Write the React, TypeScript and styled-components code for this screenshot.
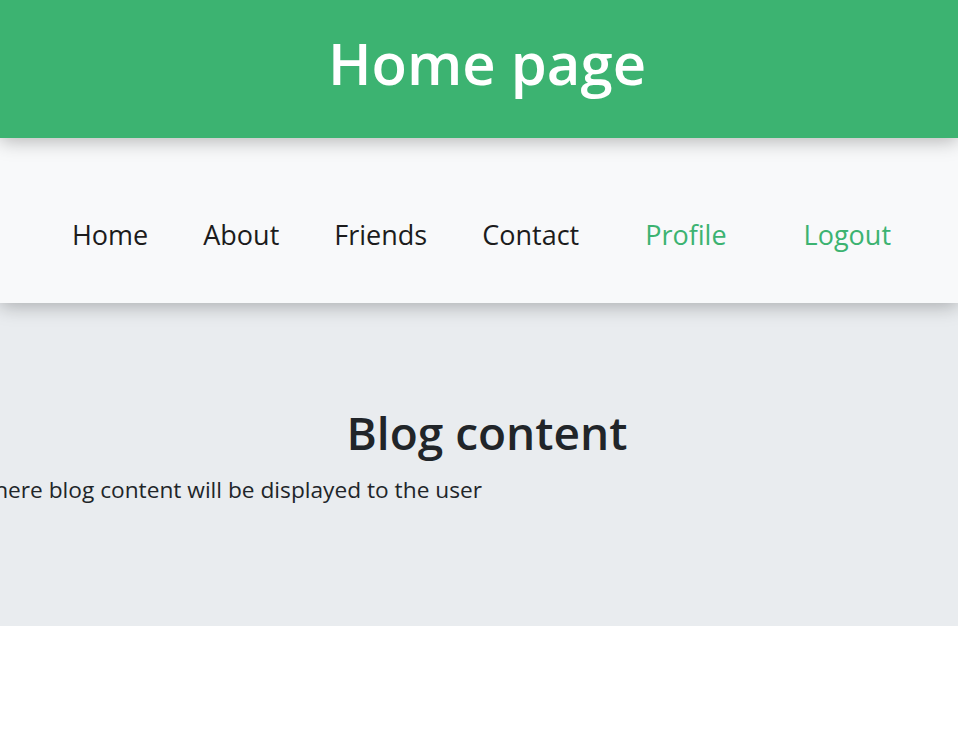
import styled, { createGlobalStyle } from 'styled-components'

const GREEN = '#3cb371'

const GlobalStyle = createGlobalStyle`
	body {
		margin: 0;
		background: #ffffff;
		font-family: 'Open Sans', 'Noto Sans', sans-serif;
		color: #212529;
		overflow-x: hidden;
	}
`

const links = [
	{ label: 'Home', accent: false },
	{ label: 'About', accent: false },
	{ label: 'Friends', accent: false },
	{ label: 'Contact', accent: false },
	{ label: 'Profile', accent: true },
	{ label: 'Logout', accent: true },
]

const App: React.FC = () => {
	return (
		<>
			<GlobalStyle />
			<Header>
				<Title>Home page</Title>
			</Header>
			<Nav>
				<NavList>
					{links.map((link) => (
						<NavLink key={link.label} href="#" $accent={link.accent}>
							{link.label}
						</NavLink>
					))}
				</NavList>
			</Nav>
			<Content>
				<Heading>Blog content</Heading>
				<TextRow>
					<Text>This is where blog content will be displayed to the user</Text>
				</TextRow>
			</Content>
		</>
	)
}

const Header = styled.header`
	position: relative;
	z-index: 2;
	height: 138px;
	padding-left: 16px;
	display: flex;
	align-items: center;
	justify-content: center;
	background-color: ${GREEN};
	box-shadow: 0 3px 18px rgba(0, 0, 0, 0.28);
`

const Title = styled.h1`
	margin: 0 0 12px;
	font-size: 58px;
	font-weight: 600;
	line-height: 1;
	color: #ffffff;
`

const Nav = styled.nav`
	position: relative;
	z-index: 1;
	height: 165px;
	padding: 30px 0 0 16px;
	box-sizing: border-box;
	display: flex;
	align-items: center;
	justify-content: center;
	background-color: #f8f9fa;
	box-shadow: 0 3px 18px rgba(0, 0, 0, 0.28);
`

const NavList = styled.div`
	display: flex;
	align-items: center;
`

const NavLink = styled.a<{ $accent: boolean }>`
	padding: 0 ${({ $accent }) => ($accent ? '38.5px' : '27.5px')};
	font-size: 27px;
	line-height: 1.2;
	text-decoration: none;
	color: ${({ $accent }) => ($accent ? GREEN : '#1c1c1c')};
`

const Content = styled.main`
	height: 323px;
	box-sizing: border-box;
	padding: 102px 0 0 16px;
	background-color: #e9ecef;
`

const Heading = styled.h2`
	margin: 0 0 13px;
	text-align: center;
	font-size: 46px;
	font-weight: 600;
	line-height: 1.2;
`

const TextRow = styled.div`
	width: 466px;
	display: flex;
	justify-content: flex-end;
`

const Text = styled.p`
	margin: 0;
	flex-shrink: 0;
	white-space: nowrap;
	font-size: 22.7px;
	line-height: 1.5;
`

export default App
